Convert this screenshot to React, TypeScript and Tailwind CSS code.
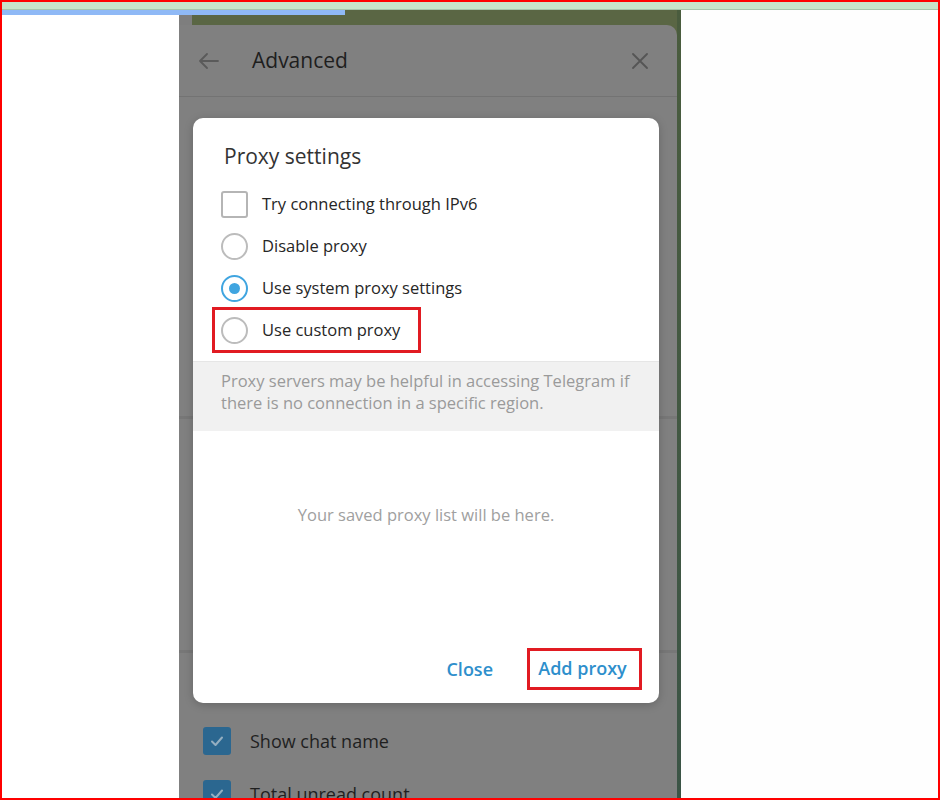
import React from "react";

const font = { fontFamily: '"Open Sans", "Noto Sans", sans-serif' };

type Option = { label: string; kind: "check" | "radio"; selected?: boolean; marked?: boolean };

const options: Option[] = [
  { label: "Try connecting through IPv6", kind: "check" },
  { label: "Disable proxy", kind: "radio" },
  { label: "Use system proxy settings", kind: "radio", selected: true },
  { label: "Use custom proxy", kind: "radio", marked: true },
];

function Control({ kind, selected }: { kind: "check" | "radio"; selected?: boolean }) {
  if (kind === "check") {
    return <span className="w-[27px] h-[27px] rounded-[3px] border-[2.5px] border-[#b5b5b5] shrink-0" />;
  }
  return (
    <span
      className={`w-[27px] h-[27px] rounded-full border-[2.5px] shrink-0 flex items-center justify-center ${
        selected ? "border-[#40a5e0]" : "border-[#bcbcbc]"
      }`}
    >
      {selected && <span className="w-[11px] h-[11px] rounded-full bg-[#40a5e0]" />}
    </span>
  );
}

function CheckedBox() {
  return (
    <span className="w-[28px] h-[28px] rounded-[3px] bg-[#2b6790] flex items-center justify-center shrink-0">
      <svg width="16" height="16" viewBox="0 0 16 16" fill="none">
        <polyline points="3,8.5 6.5,12 13,4.5" stroke="#94aec0" strokeWidth="2" strokeLinecap="round" strokeLinejoin="round" />
      </svg>
    </span>
  );
}

function ProxyDialog() {
  return (
    <div className="absolute top-[93px] left-[14px] w-[466px] h-[585px] bg-white rounded-[10px] shadow-[0_2px_10px_rgba(0,0,0,0.2)] flex flex-col">
      <h2 className="pl-[31px] pt-[24px] text-[21px] leading-[28px] text-[#333]">Proxy settings</h2>

      <div className="mt-[13px] pl-[28px] flex flex-col">
        {options.map((o) => (
          <div key={o.label} className="h-[42px] flex items-center">
            <div className="relative flex items-center gap-[14px]">
              <Control kind={o.kind} selected={o.selected} />
              <span className="text-[16.5px] text-[#262626]">{o.label}</span>
              {o.marked && (
                <span className="absolute -left-[9px] -top-[10px] w-[209px] h-[46px] border-[3px] border-[#e11b22]" />
              )}
            </div>
          </div>
        ))}
      </div>

      <div className="mt-[10px] h-[70px] bg-[#f1f1f1] border-t border-[#e6e6e6] pl-[28px] pr-[12px] pt-[8px] text-[16.5px] leading-[22px] text-[#9a9a9a]">
        Proxy servers may be helpful in accessing Telegram if there is no connection in a specific region.
      </div>

      <p className="mt-[73px] text-center text-[16.5px] leading-[22px] text-[#a0a0a0]">
        Your saved proxy list will be here.
      </p>

      <div className="mt-auto mb-[13px] pr-[17px] flex items-center justify-end gap-[34px]">
        <button className="text-[18px] font-semibold text-[#2e8fcc]">Close</button>
        <span className="h-[42px] w-[115px] border-[3px] border-[#e11b22] flex items-center justify-center">
          <button className="text-[18px] font-semibold text-[#2e8fcc] pr-[4px] -mt-[2px]">Add proxy</button>
        </span>
      </div>
    </div>
  );
}

export default function App() {
  return (
    <div className="w-[940px] h-[800px] border-2 border-[#ff0000] bg-white flex flex-col overflow-hidden" style={font}>
      {/* browser strip */}
      <div className="h-[8px] bg-[#c8e3c9] border-b border-[#a8c3aa] shrink-0" />

      <div className="relative flex-1 flex">
        <div className="absolute top-0 left-0 w-[343px] h-[5px] bg-[#8fb9f6] z-10" />

        <div className="w-[177px] shrink-0" />

        {/* telegram window, dimmed behind the modal */}
        <div className="w-[502px] mb-[2px] flex rounded-b-[10px] overflow-hidden bg-[#5a6644]">
          <div className="w-[498px] flex flex-col">
            <div className="h-[15px] flex shrink-0">
              <div className="w-[13px] bg-[#7e7e7e]" />
              <div className="flex-1 bg-[#5a6644]" />
            </div>

            <div className="relative flex-1 bg-[#808080] rounded-tr-[10px] rounded-b-[10px] flex flex-col">
              <div className="h-[72px] border-b border-[#737373] flex items-center pl-[20px] pr-[29px] shrink-0">
                <svg width="20" height="18" viewBox="0 0 20 18" fill="none">
                  <path d="M1 9H19M8 2L1 9L8 16" stroke="#5a5a5a" strokeWidth="1.8" strokeLinecap="round" strokeLinejoin="round" />
                </svg>
                <span className="ml-[33px] text-[21px] text-[#1e1e1e]">Advanced</span>
                <svg className="ml-auto" width="16" height="16" viewBox="0 0 16 16" fill="none">
                  <path d="M1 1L15 15M15 1L1 15" stroke="#555" strokeWidth="1.8" strokeLinecap="round" />
                </svg>
              </div>

              <div className="h-[319px] shrink-0" />
              <div className="h-[3px] bg-[#777] shrink-0" />
              <div className="h-[231px] shrink-0" />
              <div className="h-[3px] bg-[#777] shrink-0" />

              <div className="pt-[74px] pl-[24px] flex flex-col gap-[25px]">
                <div className="flex items-center gap-[19px]">
                  <CheckedBox />
                  <span className="text-[18px] text-[#1f1f1f]">Show chat name</span>
                </div>
                <div className="flex items-center gap-[19px]">
                  <CheckedBox />
                  <span className="text-[18px] text-[#1f1f1f]">Total unread count</span>
                </div>
              </div>

              <ProxyDialog />
            </div>
          </div>
          <div className="w-[4px] bg-gradient-to-b from-[#4a5c3e] to-[#3b5446]" />
        </div>

        <div className="flex-1 bg-[#fefefe]" />
      </div>
    </div>
  );
}
